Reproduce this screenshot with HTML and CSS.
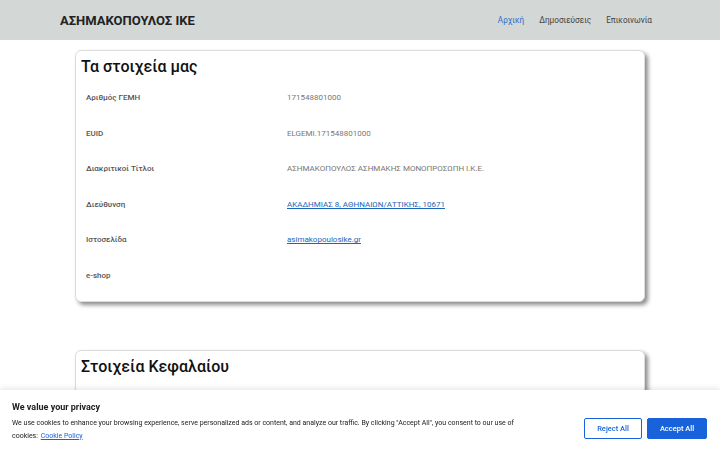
FILE: index.html
```html
<!DOCTYPE html>
<html lang="el">
<head>
  <meta charset="utf-8">
  <title>ΑΣΗΜΑΚΟΠΟΥΛΟΣ ΙΚΕ</title>
  <link rel="stylesheet" href="styles.css">
</head>
<body>

<header class="topbar">
  <div class="wrap topbar-in">
    <a class="brand" href="#">ΑΣΗΜΑΚΟΠΟΥΛΟΣ ΙΚΕ</a>
    <nav class="menu">
      <a class="menu-link active" href="#">Αρχική</a>
      <a class="menu-link" href="#">Δημοσιεύσεις</a>
      <a class="menu-link" href="#">Επικοινωνία</a>
    </nav>
  </div>
</header>

<main class="wrap">
  <section class="card">
    <h2 class="card-title">Τα στοιχεία μας</h2>
    <table class="info">
      <tr><th>Αριθμός ΓΕΜΗ</th><td>171548801000</td></tr>
      <tr><th>EUID</th><td>ELGEMI.171548801000</td></tr>
      <tr><th>Διακριτικοί Τίτλοι</th><td>ΑΣΗΜΑΚΟΠΟΥΛΟΣ ΑΣΗΜΑΚΗΣ ΜΟΝΟΠΡΟΣΩΠΗ Ι.Κ.Ε.</td></tr>
      <tr><th>Διεύθυνση</th><td><a href="#">ΑΚΑΔΗΜΙΑΣ 8, ΑΘΗΝΑΙΩΝ/ΑΤΤΙΚΗΣ, 10671</a></td></tr>
      <tr><th>Ιστοσελίδα</th><td><a href="#">asimakopoulosike.gr</a></td></tr>
      <tr><th>e-shop</th><td></td></tr>
    </table>
  </section>

  <section class="card card-tall">
    <h2 class="card-title">Στοιχεία Κεφαλαίου</h2>
  </section>
</main>

<div class="cookie-bar">
  <div class="cookie-text">
    <p class="cookie-head">We value your privacy</p>
    <p class="cookie-desc">We use cookies to enhance your browsing experience, serve personalized ads or content, and analyze our traffic. By clicking "Accept All", you consent to our use of cookies: <a href="#">Cookie Policy</a></p>
  </div>
  <div class="cookie-btns">
    <button class="btn btn-outline">Reject All</button>
    <button class="btn btn-fill">Accept All</button>
  </div>
</div>

</body>
</html>
```

FILE: styles.css
```css
body {
  margin: 0;
  font-family: Roboto, "Noto Sans", sans-serif;
  background: #ffffff;
  color: #333;
  overflow: hidden;
  height: 100vh;
}

.wrap {
  width: 600px;
  margin: 0 auto;
}

/* 頂部導覽 */
.topbar {
  background: #d3d7d6;
  height: 40px;
}

.topbar-in {
  display: flex;
  align-items: center;
  justify-content: space-between;
  height: 100%;
}

.brand {
  font-size: 13px;
  font-weight: 700;
  color: #222;
  text-decoration: none;
}

.menu {
  display: flex;
  gap: 15px;
  padding-right: 8px;
}

.menu-link {
  font-size: 8.2px;
  color: #444;
  text-decoration: none;
}

.menu-link.active {
  color: #2f6bc4;
}

/* 卡片 */
.card {
  margin: 10px 15px 48px;
  padding: 4px 5px 8px;
  border: 1px solid #dcdcdc;
  border-radius: 6px;
  box-shadow: 3px 3px 4px rgba(0, 0, 0, 0.45);
  background: #fff;
}

.card-tall {
  min-height: 120px;
}

.card-title {
  margin: 0;
  font-size: 16px;
  font-weight: 500;
  color: #111;
  line-height: 24px;
}

.info {
  border-collapse: collapse;
  width: 100%;
  margin-top: 1px;
}

.info th,
.info td {
  font-size: 8px;
  height: 35.5px;
  padding: 0 5px;
  text-align: left;
  vertical-align: middle;
}

.info th {
  width: 191px;
  font-weight: 500;
  color: #555;
}

.info td {
  color: #777;
}

.info a {
  color: #1a66b8;
}

/* cookie 提示 */
.cookie-bar {
  position: fixed;
  left: 0;
  right: 0;
  bottom: 0;
  height: 60px;
  background: #fff;
  box-shadow: 0 -1px 6px rgba(0, 0, 0, 0.12);
  display: flex;
  align-items: center;
  padding: 0 13px 0 12px;
  box-sizing: border-box;
}

.cookie-text {
  flex: 1;
  padding-top: 3px;
}

.cookie-head {
  margin: 0 0 3px;
  font-size: 9px;
  line-height: 13px;
  font-weight: 700;
  color: #212121;
}

.cookie-desc {
  margin: 0;
  font-size: 7px;
  line-height: 12.5px;
  color: #212121;
  width: 510px;
}

.cookie-desc a {
  color: #1863dc;
  margin-left: 1px;
}

.cookie-btns {
  display: flex;
  gap: 5px;
  margin-top: 17px;
}

.btn {
  width: 58px;
  height: 21px;
  font-family: inherit;
  font-size: 7.5px;
  font-weight: 500;
  border: 1px solid #1863dc;
  border-radius: 2px;
}

.btn-outline {
  background: #fff;
  color: #1863dc;
  margin-left: 1px;
}

.btn-fill {
  width: 60px;
  background: #1863dc;
  color: #fff;
}
```
